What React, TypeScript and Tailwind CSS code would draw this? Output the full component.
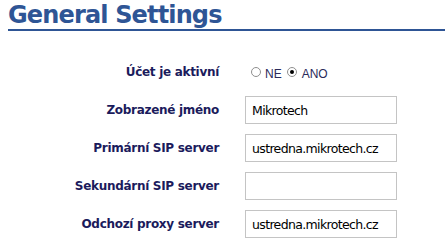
const rows: { label: string; value?: string; radio?: boolean }[] = [
  { label: "Účet je aktivní", radio: true },
  { label: "Zobrazené jméno", value: "Mikrotech" },
  { label: "Primární SIP server", value: "ustredna.mikrotech.cz" },
  { label: "Sekundární SIP server", value: "" },
  { label: "Odchozí proxy server", value: "ustredna.mikrotech.cz" },
];

function Radio({ checked }: { checked?: boolean }) {
  return (
    <span className="inline-flex h-[10px] w-[10px] -translate-y-[2px] items-center justify-center rounded-full border border-[#8f8f8f] bg-white">
      {checked && <span className="h-[4px] w-[4px] rounded-full bg-black" />}
    </span>
  );
}

export default function App() {
  return (
    <div className="h-[244px] w-[445px] overflow-hidden bg-white font-['DejaVu_Sans',sans-serif]">
      <div className="ml-2 border-b-2 border-[#2e5595] pt-[1px]">
        <h1 className="text-[24px] leading-[28px] font-bold tracking-[-0.85px] text-[#2e5595]">
          General Settings
        </h1>
      </div>
      <div className="mt-[22px] flex flex-col">
        {rows.map((r) => (
          <div key={r.label} className="flex h-[38px] items-center">
            <div className="w-[220px] pr-[1px] text-right text-[12px] font-bold tracking-[-0.3px] text-[#1b1b5c]">
              {r.label}
            </div>
            <div className="ml-[25px] flex items-center">
              {r.radio ? (
                <div className="ml-[6px] mt-[3px] flex items-center font-['Liberation_Sans',sans-serif] text-[12px] text-[#2a2a5a]">
                  <Radio />
                  <span className="ml-[4px] mr-[5px]">NE</span>
                  <Radio checked />
                  <span className="ml-[5px]">ANO</span>
                </div>
              ) : (
                <input
                  readOnly
                  value={r.value}
                  className="h-[28px] w-[152px] border border-[#c4c4c4] bg-white px-[6px] text-[12.5px] tracking-[-0.65px] text-black outline-none"
                />
              )}
            </div>
          </div>
        ))}
      </div>
    </div>
  );
}
